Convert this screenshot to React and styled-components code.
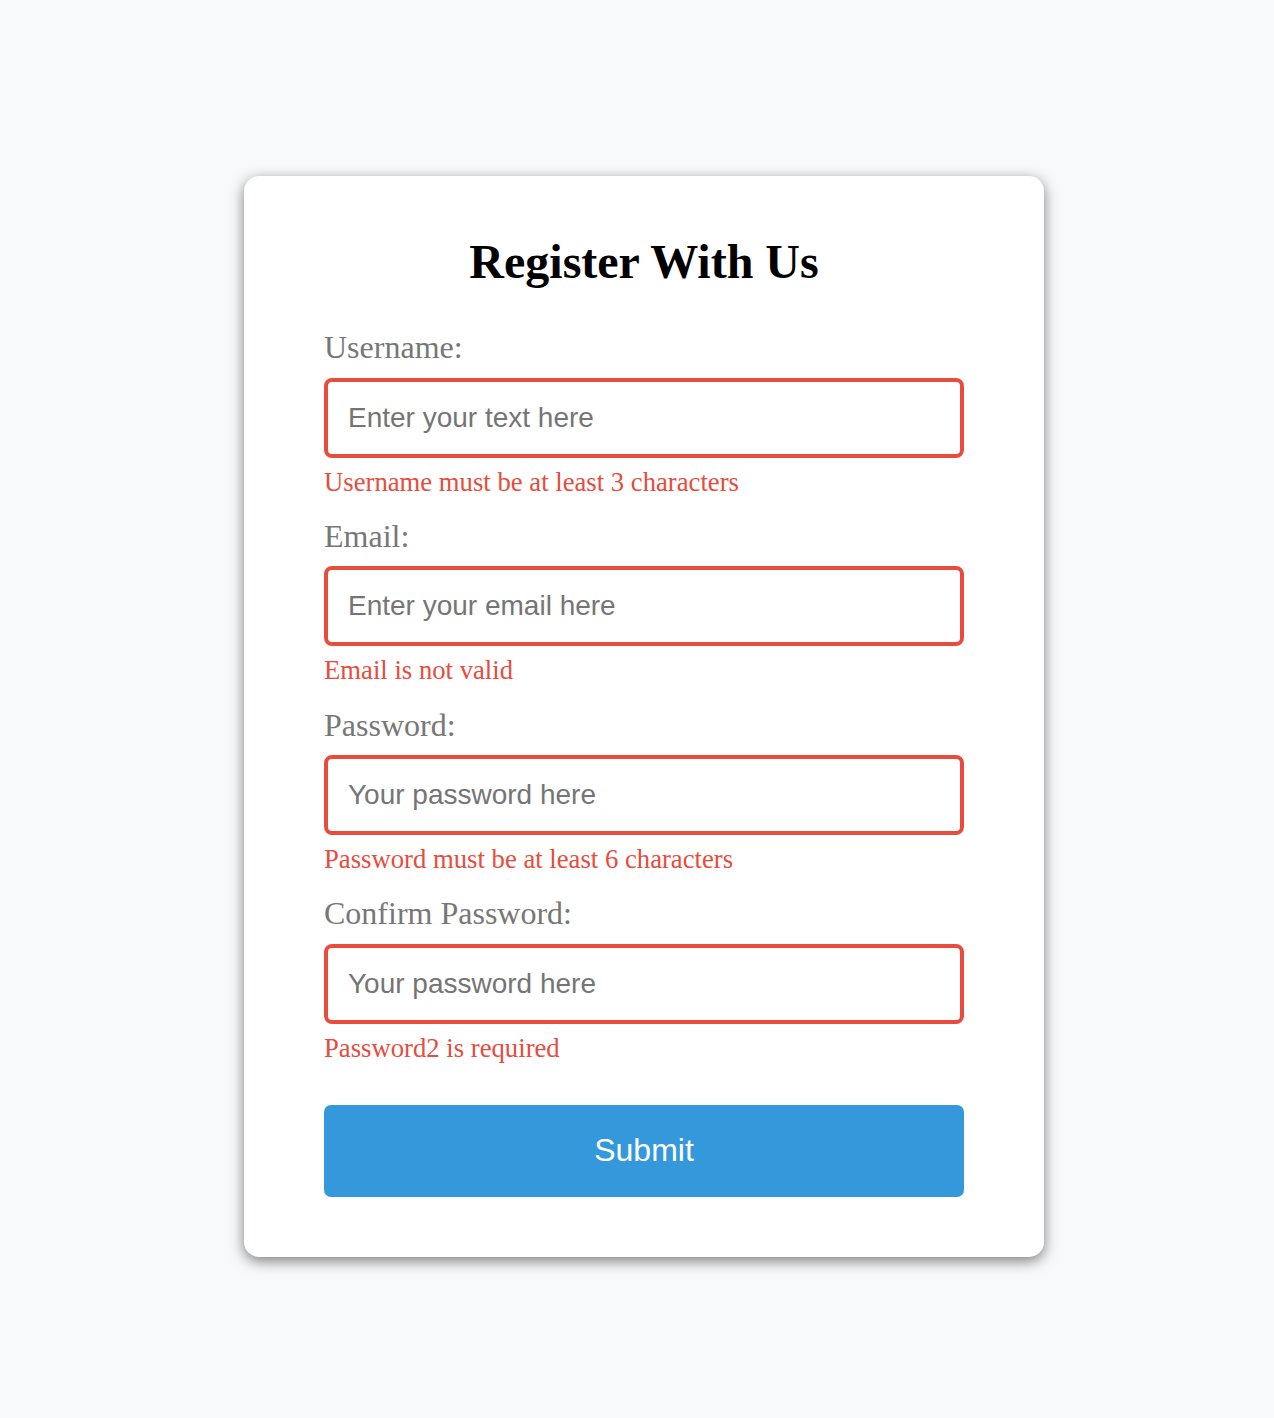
import React from "react";
import styled, { createGlobalStyle } from "styled-components";

const Global = createGlobalStyle`
  * { box-sizing: border-box; }
  html, body { margin: 0; padding: 0; }
  body {
    background: #f8f9fa;
    font-family: "Liberation Serif", "Times New Roman", serif;
  }
`;

const Page = styled.div`
  min-height: 1418px;
  display: flex;
  align-items: flex-start;
  justify-content: center;
  padding: 176px 0 0 14px;
`;

const Card = styled.div`
  width: 800px;
  flex-shrink: 0;
  background: #fff;
  border-radius: 15px;
  box-shadow: 0 4px 14px rgba(0, 0, 0, 0.5);
  padding: 58px 80px 60px;
  display: flex;
  flex-direction: column;
`;

const Title = styled.h2`
  margin: 0 0 40px;
  text-align: center;
  font-size: 48px;
  font-weight: bold;
  color: #000;
  line-height: 55px;
`;

const Field = styled.div`
  display: flex;
  flex-direction: column;
  flex-shrink: 0;
  margin-bottom: 20.3px;
`;

const Label = styled.label`
  color: #777;
  font-size: 32px;
  line-height: 37px;
  margin-bottom: 11.5px;
`;

const Input = styled.input`
  flex-shrink: 0;
  height: 80px;
  width: 100%;
  border: 4px solid ${(p) => (p.$error ? "#e74c3c" : "#f0f0f0")};
  border-radius: 8px;
  padding: 0 20px;
  font-family: "Liberation Sans", Arial, sans-serif;
  font-size: 28px;
  outline: none;
  &::placeholder { color: #757575; }
`;

const Error = styled.small`
  color: #e74c3c;
  font-size: 26.7px;
  line-height: 31px;
  margin-top: 9px;
`;

const Button = styled.button`
  flex-shrink: 0;
  margin-top: 20.5px;
  height: 92px;
  width: 100%;
  background: #3498db;
  border: none;
  border-radius: 7px;
  color: #fff;
  font-family: "Liberation Sans", Arial, sans-serif;
  font-size: 32px;
  cursor: pointer;
`;

const fields = [
  { label: "Username:", type: "text", ph: "Enter your text here", err: "Username must be at least 3 characters" },
  { label: "Email:", type: "text", ph: "Enter your email here", err: "Email is not valid" },
  { label: "Password:", type: "password", ph: "Your password here", err: "Password must be at least 6 characters" },
  { label: "Confirm Password:", type: "password", ph: "Your password here", err: "Password2 is required" },
];

export default function App() {
  return (
    <>
      <Global />
      <Page>
        <Card>
          <Title>Register With Us</Title>
          {fields.map((f) => (
            <Field key={f.label}>
              <Label>{f.label}</Label>
              <Input type={f.type} placeholder={f.ph} $error />
              <Error>{f.err}</Error>
            </Field>
          ))}
          <Button>Submit</Button>
        </Card>
      </Page>
    </>
  );
}
